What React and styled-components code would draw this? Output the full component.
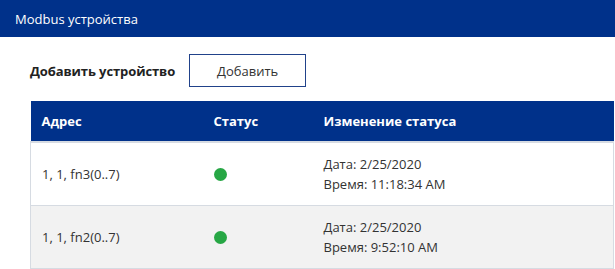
import React from "react";
import styled, { createGlobalStyle } from "styled-components";

const Global = createGlobalStyle`
  html, body { margin: 0; padding: 0; background: #fff; }
  body { font-family: "Open Sans", "Noto Sans", sans-serif; color: #333; }
`;

const TopBar = styled.header`
  height: 37px;
  background: #00318a;
  color: #fff;
  display: flex;
  align-items: center;
  padding-left: 15px;
  font-size: 13px;
`;

const Content = styled.main`
  padding: 17px 1px 0 30px;
`;

const AddRow = styled.div`
  display: flex;
  align-items: center;
  gap: 14px;
  height: 33px;
`;

const AddLabel = styled.span`
  font-size: 13px;
  font-weight: 700;
  color: #222;
  letter-spacing: -0.1px;
`;

const AddButton = styled.button`
  width: 117px;
  height: 33px;
  background: #fff;
  border: 1px solid #21428a;
  font-family: inherit;
  font-size: 13px;
  color: #333;
  padding: 0;
`;

const Table = styled.table`
  margin-top: 14px;
  width: 100%;
  border-collapse: collapse;
  font-size: 13px;
`;

const HeadCell = styled.th`
  background: #00318a;
  color: #fff;
  font-weight: 700;
  text-align: left;
  height: 41px;
  padding: 0 11px;
  border-bottom: 2px solid #d6dbe2;
  width: ${(p) => p.$w || "auto"};
  box-sizing: border-box;
`;

const Row = styled.tr`
  background: ${(p) => (p.$alt ? "#f2f2f2" : "#fff")};
`;

const Cell = styled.td`
  height: 62px;
  padding: 0 11px;
  border: 1px solid #d6dbe2;
  border-left: ${(p) => (p.$first ? "1px solid #d6dbe2" : "none")};
  border-right: ${(p) => (p.$last ? "1px solid #d6dbe2" : "none")};
  vertical-align: middle;
  line-height: 20px;
`;

const Dot = styled.span`
  display: block;
  width: 13px;
  height: 13px;
  border-radius: 50%;
  background: #27a745;
`;

const rows = [
  { addr: "1, 1, fn3(0..7)", date: "2/25/2020", time: "11:18:34 AM" },
  { addr: "1, 1, fn2(0..7)", date: "2/25/2020", time: "9:52:10 AM" },
];

export default function App() {
  return (
    <>
      <Global />
      <TopBar>Modbus устройства</TopBar>
      <Content>
        <AddRow>
          <AddLabel>Добавить устройство</AddLabel>
          <AddButton>Добавить</AddButton>
        </AddRow>
        <Table>
          <thead>
            <tr>
              <HeadCell $w="172px">Адрес</HeadCell>
              <HeadCell $w="110px">Статус</HeadCell>
              <HeadCell>Изменение статуса</HeadCell>
            </tr>
          </thead>
          <tbody>
            {rows.map((r, i) => (
              <Row key={i} $alt={i % 2 === 1}>
                <Cell $first>{r.addr}</Cell>
                <Cell>
                  <Dot />
                </Cell>
                <Cell $last>
                  Дата: {r.date}
                  <br />
                  Время: {r.time}
                </Cell>
              </Row>
            ))}
          </tbody>
        </Table>
      </Content>
    </>
  );
}
